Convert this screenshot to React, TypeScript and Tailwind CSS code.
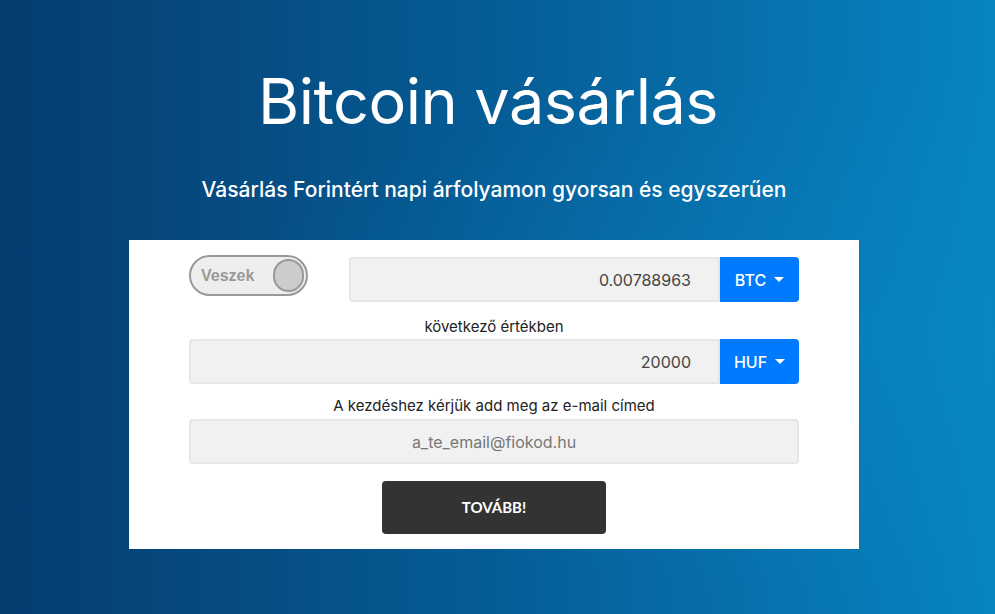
import React from 'react';

const Caret = () => (
  <span className="ml-2 inline-block h-0 w-0 border-x-[5px] border-t-[5px] border-x-transparent border-t-white align-middle" />
);

const CurrencyButton = ({ label }: { label: string }) => (
  <button className="flex h-full w-[79px] items-center justify-center rounded-r-[4px] bg-[#007bff] text-[16px] font-medium text-white">
    {label}
    <Caret />
  </button>
);

export default function App() {
  return (
    <div className="relative min-h-[614px] w-full overflow-hidden bg-[linear-gradient(90deg,#053c6f_0%,#06609a_55%,#0784c2_100%)] font-['Inter',sans-serif]">
      <div className="pointer-events-none absolute inset-0 bg-[radial-gradient(ellipse_at_90%_55%,rgba(10,140,200,0.35),transparent_55%)]" />
      <div className="relative flex flex-col items-center pr-[7px]">
        <h1 className="mr-[12px] mt-[61px] text-[63px] font-normal leading-[80px] tracking-[-0.5px] text-white">
          Bitcoin vásárlás
        </h1>
        <p className="mt-[35px] text-[21px] font-medium leading-[28px] text-white">
          Vásárlás Forintért napi árfolyamon gyorsan és egyszerűen
        </p>

        <div className="mt-[36px] w-[730px] bg-white px-[60px] pb-[15px] pt-[15px]">
          <div className="flex items-start">
            <div className="w-[160px]">
              <div className="flex h-[41px] w-[119px] items-center justify-between rounded-full border-2 border-[#999] bg-[#eee] pl-[10px] pr-[2px]">
                <span className="font-['Liberation_Sans',sans-serif] text-[16px] font-bold text-[#999]">Veszek</span>
                <span className="h-[33px] w-[31px] rounded-full border-2 border-[#999] bg-[#ccc]" />
              </div>
            </div>
            <div className="mt-[2px] flex h-[45px] flex-1">
              <div className="flex flex-1 items-center justify-end rounded-l-[4px] border-2 border-[#e6e6e6] bg-[#f1f1f1] pr-[27px] text-[16px] text-[#444]">
                0.00788963
              </div>
              <CurrencyButton label="BTC" />
            </div>
          </div>

          <p className="mt-[14px] text-center text-[15px] leading-[22px] text-[#222]">következő értékben</p>

          <div className="mt-[1px] flex h-[45px]">
            <div className="flex flex-1 items-center justify-end rounded-l-[4px] border-2 border-[#e6e6e6] bg-[#f1f1f1] pr-[27px] text-[16px] text-[#444]">
              20000
            </div>
            <CurrencyButton label="HUF" />
          </div>

          <p className="mt-[11px] text-center text-[15px] leading-[22px] text-[#222]">
            A kezdéshez kérjük add meg az e-mail címed
          </p>

          <div className="mt-[2px] flex h-[45px] items-center justify-center rounded-[4px] border-2 border-[#e6e6e6] bg-[#f1f1f1] text-[16px] text-[#777]">
            a_te_email@fiokod.hu
          </div>

          <div className="mt-[17px] flex justify-center">
            <button className="h-[53px] w-[224px] rounded-[4px] bg-[#333] font-['Lato',sans-serif] text-[15px] font-bold text-white">
              TOVÁBB!
            </button>
          </div>
        </div>
      </div>
    </div>
  );
}
